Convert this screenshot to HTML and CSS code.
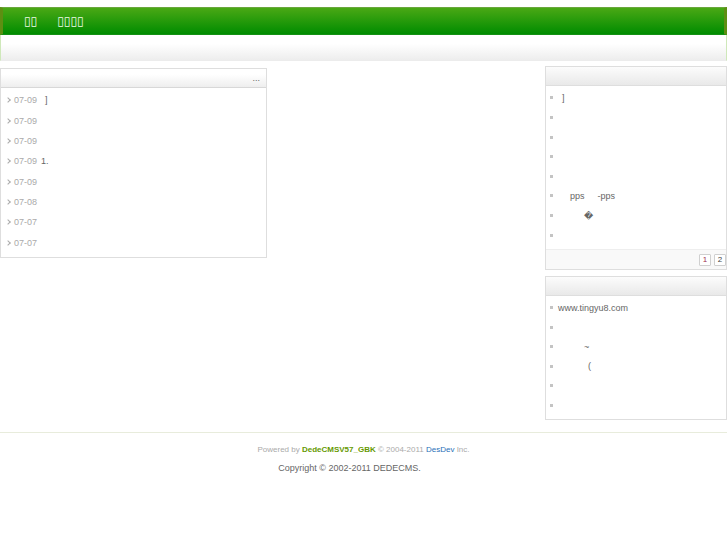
FILE: index.html
```
<!DOCTYPE html>
<html lang="zh">
<head>
<meta charset="utf-8">
<title>DedeCMS</title>
<link rel="stylesheet" href="styles.css">
</head>
<body>
<header>
  <nav class="nav"><a href="#">▯▯</a><a href="#">▯▯▯▯</a></nav>
  <div class="subnav"></div>
</header>
<main class="columns">
  <section class="panel latest">
    <div class="panel-head"><a href="#">...</a></div>
    <ul class="dated">
      <li><time>07-09</time><a href="#" class="indent-small">]</a></li>
      <li><time>07-09</time></li>
      <li><time>07-09</time></li>
      <li><time>07-09</time><a href="#">1.</a></li>
      <li><time>07-09</time></li>
      <li><time>07-08</time></li>
      <li><time>07-07</time></li>
      <li><time>07-07</time></li>
    </ul>
  </section>
  <aside class="side">
    <section class="panel">
      <div class="panel-head"></div>
      <ul class="plain">
        <li><a href="#" class="indent-small">]</a></li>
        <li></li>
        <li></li>
        <li></li>
        <li></li>
        <li class="spaced"><a href="#" class="indent-medium">pps</a><a href="#">-pps</a></li>
        <li><a href="#" class="indent-large unknown">�</a></li>
        <li></li>
      </ul>
      <div class="pager"><a href="#" class="current">1</a><a href="#">2</a></div>
    </section>
    <section class="panel">
      <div class="panel-head"></div>
      <ul class="plain short">
        <li><a href="#">www.tingyu8.com</a></li>
        <li></li>
        <li><a href="#" class="indent-large">~</a></li>
        <li><a href="#" class="indent-wide">(</a></li>
        <li></li>
        <li></li>
      </ul>
    </section>
  </aside>
</main>
<footer>
  <p class="powered">Powered by <a href="#" class="cms">DedeCMSV57_GBK</a> © 2004-2011 <a href="#" class="dev">DesDev</a> Inc.</p>
  <p class="copyright">Copyright © 2002-2011 DEDECMS.</p>
</footer>
</body>
</html>
```
FILE: styles.css
```
* { box-sizing: border-box; }
body {
  margin: 0;
  padding-top: 7px;
  background: #fff;
  color: #666;
  font: 9px/18px "Liberation Sans", Arial, sans-serif;
}
a { color: inherit; text-decoration: none; }
ul, p { margin: 0; padding: 0; list-style: none; }

.nav {
  display: flex;
  gap: 20px;
  height: 28px;
  padding: 0 21px;
  border: 1px solid #369a1b;
  border-width: 1px 3px;
  border-color: #6aa73c #5d8f12 #159014;
  background: linear-gradient(#4aa815, #008c00);
  color: #f0faea;
  font: 12px/26px "DejaVu Sans", sans-serif;
}
.subnav {
  height: 26px;
  border: 1px solid #ececec;
  border-width: 0 1px 1px;
  border-left-color: #cfe8ba;
  border-right-color: #cfe8ba;
  background: linear-gradient(#fff 35%, #ededed);
}

.columns {
  display: grid;
  grid-template-columns: 267fr 278fr 182fr;
  align-items: start;
  padding-top: 5px;
}
.latest { margin-top: 2px; }
.side { grid-column: 3; display: grid; gap: 6px; }
.panel { border: 1px solid #dedede; }
.panel-head {
  height: 19px;
  padding: 0 6px;
  border-bottom: 1px solid #dedede;
  background: linear-gradient(#fcfcfc, #e9e9e9);
  text-align: right;
}
.latest .panel-head {
  height: 19px;
  border-bottom: 1px solid #d8d8d8;
  background: linear-gradient(#fff 30%, #eee);
}

/* Rows share each list's height evenly. */
.dated, .plain {
  display: grid;
  grid-auto-rows: 1fr;
}
.dated {
  min-height: 169px;
  padding: 2px 5px 4px;
}
.dated li {
  display: flex;
  align-items: center;
  gap: 4px;
}
.dated li::before {
  content: "";
  width: 3px;
  height: 3px;
  border: solid #aaa;
  border-width: 1px 1px 0 0;
  transform: rotate(45deg);
}
.dated time { color: #aaa; }

.plain {
  min-height: 163px;
  padding: 2px 4px 4px;
}
.plain.short { min-height: 123px; }
.plain li {
  display: flex;
  align-items: center;
}
.plain li::before {
  content: "";
  width: 3px;
  height: 3px;
  margin-right: 5px;
  background: #c4c4c4;
}
.spaced a + a { margin-left: 13px; }
.indent-small { margin-left: 4px; }
.indent-medium { margin-left: 12px; }
.indent-large { margin-left: 26px; }
.indent-wide { margin-left: 30px; }
.unknown { font-family: "DejaVu Sans", sans-serif; }

.pager {
  display: flex;
  justify-content: flex-end;
  align-items: center;
  gap: 3px;
  height: 20px;
  border-top: 1px solid #eee;
  background: #f9f9f9;
}
.pager a {
  width: 12px;
  height: 12px;
  border: 1px solid #d0d0d0;
  border-radius: 1px;
  background: #fff;
  color: #444;
  font-size: 8px;
  line-height: 10px;
  text-align: center;
}
.pager .current { color: #a03050; }

footer {
  margin-top: 12px;
  padding-top: 8px;
  border-top: 1px solid #e8ecdc;
  text-align: center;
}
.powered { color: #aaa; font-size: 8px; }
.cms { color: #690; font-weight: bold; }
.dev { color: #2a70b8; }
.copyright { padding-right: 28px; }
```
